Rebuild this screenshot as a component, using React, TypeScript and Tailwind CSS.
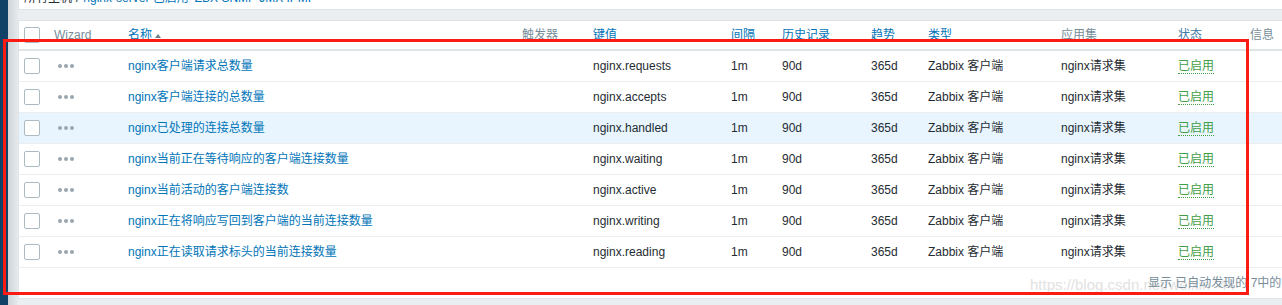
import React from "react";

const cols =
  "grid grid-cols-[30px_74px_394px_71px_138px_51px_89px_57px_133px_117px_72px_1fr] items-center";

const rows = [
  ["nginx客户端请求总数量", "nginx.requests"],
  ["nginx客户端连接的总数量", "nginx.accepts"],
  ["nginx已处理的连接总数量", "nginx.handled"],
  ["nginx当前正在等待响应的客户端连接数量", "nginx.waiting"],
  ["nginx当前活动的客户端连接数", "nginx.active"],
  ["nginx正在将响应写回到客户端的当前连接数量", "nginx.writing"],
  ["nginx正在读取请求标头的当前连接数量", "nginx.reading"],
];

function Checkbox() {
  return (
    <div className="w-[16px] h-[16px] border border-[#acbbc2] rounded-[2px] bg-white" />
  );
}

function Dots() {
  return (
    <div className="flex gap-[2px] pl-[4px]">
      <div className="w-[4px] h-[4px] rounded-full bg-[#9aa7ae]" />
      <div className="w-[4px] h-[4px] rounded-full bg-[#9aa7ae]" />
      <div className="w-[4px] h-[4px] rounded-full bg-[#9aa7ae]" />
    </div>
  );
}

export default function App() {
  return (
    <div
      className="relative w-[1282px] h-[305px] overflow-hidden flex bg-[#ebeef0] text-[12px] text-[#1f2c33]"
      style={{ fontFamily: '"Liberation Sans", Arial, "Noto Sans CJK SC", sans-serif' }}
    >
      <div className="w-[8px] shrink-0 bg-[#0f4266]" />
      <div className="w-[10px] shrink-0 bg-gradient-to-r from-[#cdd4d8] to-[#e6eaec]" />
      <div className="flex-1 flex flex-col min-w-0">
        <div className="h-[10px] shrink-0 bg-white border-b border-l border-[#dfe4e7] overflow-hidden pl-[5px]">
          <div className="mt-[-9px] whitespace-nowrap leading-[14px] text-[#1f2c33]">
            <span>所有主机</span>
            <span className="px-[4px]">/</span>
            <span className="text-[#0275b8]">nginx-server 已启用</span>
            <span className="pl-[6px] text-[#0275b8]">ZBX SNMP JMX IPMI</span>
          </div>
        </div>
        <div className="h-[10px] shrink-0" />
        <div className="bg-white border-t border-b border-l border-[#dfe4e7] shrink-0">
          <div className={`${cols} h-[30px] border-b-2 border-[#dfe4e7] text-[#768d99]`}>
            <div className="pl-[5px]">
              <Checkbox />
            </div>
            <div className="pl-[5px]">Wizard</div>
            <div className="pl-[5px] flex items-center text-[#0275b8]">
              名称
              <svg width="8" height="6" viewBox="0 0 8 6" className="ml-[2px] mt-[1px]">
                <path d="M1 5 L4 1 L7 5 Z" fill="#6d7f88" />
              </svg>
            </div>
            <div className="pl-[5px]">触发器</div>
            <div className="pl-[5px] text-[#0275b8]">键值</div>
            <div className="pl-[5px] text-[#0275b8]">间隔</div>
            <div className="pl-[5px] text-[#0275b8]">历史记录</div>
            <div className="pl-[5px] text-[#0275b8]">趋势</div>
            <div className="pl-[5px] text-[#0275b8]">类型</div>
            <div className="pl-[5px]">应用集</div>
            <div className="pl-[5px] text-[#3f79a6]">状态</div>
            <div className="pl-[5px]">信息</div>
          </div>
          {rows.map(([name, key], i) => (
            <div
              key={key}
              className={`${cols} h-[31px] border-b border-[#ebeef0] ${i === 2 ? "bg-[#e8f5ff]" : ""}`}
            >
              <div className="pl-[5px]">
                <Checkbox />
              </div>
              <div className="pl-[5px]">
                <Dots />
              </div>
              <div className="pl-[5px] text-[#0275b8] whitespace-nowrap">{name}</div>
              <div className="pl-[5px]" />
              <div className="pl-[5px]">{key}</div>
              <div className="pl-[5px]">1m</div>
              <div className="pl-[5px]">90d</div>
              <div className="pl-[5px]">365d</div>
              <div className="pl-[5px] whitespace-nowrap">Zabbix 客户端</div>
              <div className="pl-[5px] whitespace-nowrap">nginx请求集</div>
              <div className="pl-[5px]">
                <span className="text-[#429e47] border-b border-dotted border-[#429e47] leading-[14px] inline-block">
                  已启用
                </span>
              </div>
              <div className="pl-[5px]" />
            </div>
          ))}
          <div className="h-[30px] flex items-center pl-[1129px] whitespace-nowrap text-[#768d99] relative">
            <span className="absolute left-[1011px] top-[6px] text-[15px] text-[#e2e2e2] whitespace-nowrap">
              https://blog.csdn.net/weixin_44
            </span>
            <span className="relative">显示 已自动发现的 7中的 7</span>
          </div>
        </div>
      </div>
      <div className="absolute left-[3px] top-[39px] w-[1246px] h-[256px] border-[3px] border-[#fb1b13] pointer-events-none" />
    </div>
  );
}
